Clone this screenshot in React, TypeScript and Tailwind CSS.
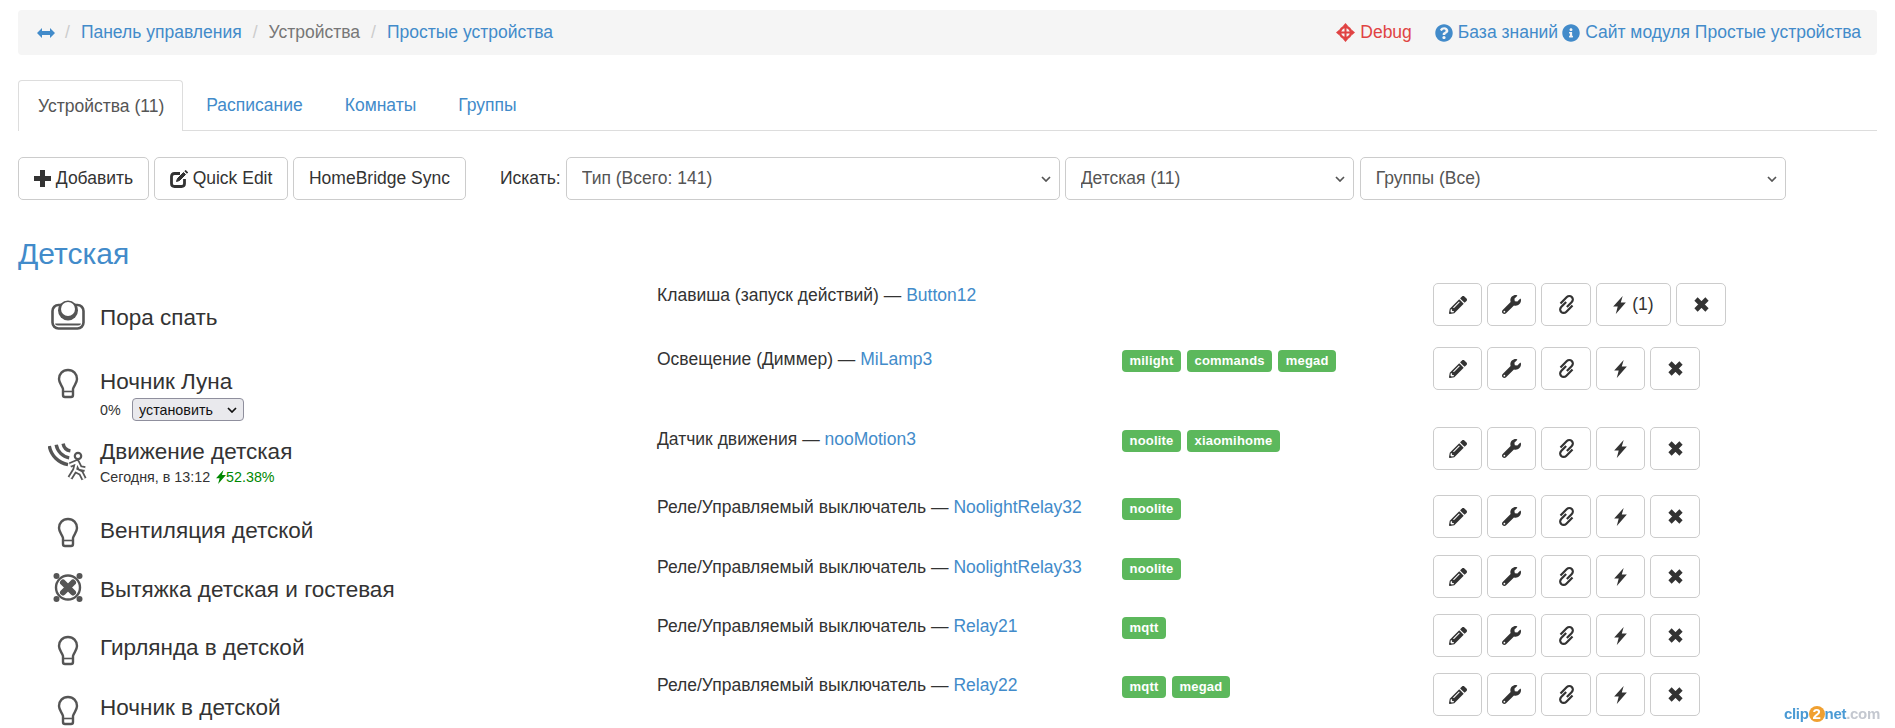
import { FaQuestionCircle, FaInfoCircle, FaPencilAlt, FaWrench } from "react-icons/fa"

const Bulb = () => (
    <svg width="22" height="31" viewBox="0 0 22 31" fill="none" stroke="#555" strokeWidth="2.4">
        <path d="M11 2C5.5 2 2 6 2 11c0 4 3 6.500 4 10v6q0 2 2 2h6q2 0 2-2v-6c1-3.500 4-6 4-10 0-5-3.500-9-9-9z" />
        <path d="M6.500 23.500h9" strokeWidth="1.600" />
    </svg>
)

const ButtonIcon = () => (
    <svg width="34" height="30" viewBox="0 0 34 30" fill="none" stroke="#555">
        <rect x="1.500" y="5" width="31" height="23.500" rx="6" strokeWidth="2.600" />
        <path d="M5 23.500q0 1 2 1h20q2 0 2-1" strokeWidth="1.800" />
        <circle cx="17" cy="10.500" r="10" fill="#555" stroke="none" />
        <circle cx="17" cy="9" r="7" fill="#fff" stroke="none" />
    </svg>
)

const MotionIcon = () => (
    <svg width="40" height="40" viewBox="0 0 40 40" fill="none" stroke="#555">
        <g strokeWidth="3.400">
            <path d="M15.100 1.600A9 9 0 0 0 22.400 8.900" />
            <path d="M8.200 2.800A16 16 0 0 0 21.200 15.800" />
            <path d="M1.300 4A23 23 0 0 0 20 22.600" />
        </g>
        <circle cx="30" cy="14" r="3.200" strokeWidth="2.200" />
        <path d="M22 23L29 20L32 26L37 27M29 20L27 28L22 36M27 28L33 31L36 37" strokeWidth="5.500" strokeLinejoin="round" />
        <path d="M22 23L29 20L32 26L37 27M29 20L27 28L22 36M27 28L33 31L36 37" stroke="#fff" strokeWidth="2" strokeLinejoin="round" />
    </svg>
)

const FanIcon = () => (
    <svg width="30" height="31" viewBox="0 0 30 31" fill="none" stroke="#555">
        <circle cx="15" cy="15.500" r="12" strokeWidth="2.400" />
        <circle cx="3.500" cy="4" r="3" fill="#555" stroke="none" />
        <circle cx="26.500" cy="4" r="3" fill="#555" stroke="none" />
        <circle cx="3.500" cy="27" r="3" fill="#555" stroke="none" />
        <circle cx="26.500" cy="27" r="3" fill="#555" stroke="none" />
        <path d="M10 10.500l10 10M20 10.500l-10 10" strokeWidth="6" strokeLinecap="round" />
    </svg>
)

const Bolt = () => (
    <svg width="13" height="18" viewBox="0 0 12 17" fill="#333">
        <path d="M9 0L0 10h4.300L2.500 17 12 6.200H7.200L9 0z" />
    </svg>
)

const ChainIcon = () => (
    <svg className="overflow-visible" width="19" height="19" viewBox="0 0 19 19" fill="none" stroke="#333" strokeWidth="2.200">
        <g transform="rotate(-45 9.500 9.500)">
            <path d="M6 4.500H15a3.500 3.500 0 0 1 0 7H8" />
            <path d="M13 14.500H4a3.500 3.500 0 0 1 0-7H11" />
        </g>
    </svg>
)

const RemoveIcon = () => (
    <svg width="15" height="15" viewBox="0 0 15 15" fill="none" stroke="#333" strokeWidth="4.600">
        <path d="M2 2l11 11M13 2L2 13" />
    </svg>
)

const PlusIcon = () => (
    <svg width="17" height="17" viewBox="0 0 17 17" fill="#333">
        <path d="M6 0h5v6h6v5h-6v6H6v-6H0V6h6z" />
    </svg>
)

const EditIcon = () => (
    <svg width="18" height="18" viewBox="0 0 18 18" fill="none" stroke="#333">
        <path d="M10 3.500H4.500q-3 0-3 3v7q0 3 3 3h7q3 0 3-3V9" strokeWidth="2.800" />
        <path d="M6.500 11.500l1-3 6-6 2 2-6 6z" fill="#333" strokeWidth="1" />
        <path d="M15 0.500l2.500 2.500" strokeWidth="1.800" />
    </svg>
)

const ArrowsIcon = () => (
    <svg width="18" height="10" viewBox="0 0 18 10" fill="#428bca">
        <path d="M0 5l5-5v3h8V0l5 5-5 5V7H5v3z" />
    </svg>
)

const Target = () => (
    <svg width="19" height="19" viewBox="0 0 19 19" fill="none" stroke="#e04343" strokeWidth="2.400">
        <circle cx="9.500" cy="9.500" r="5.500" />
        <path d="M9.500 0l-3 3.500h6zM9.500 19l-3-3.500h6zM0 9.500l3.500-3v6zM19 9.500l-3.500-3v6z" fill="#e04343" stroke="none" />
        <path d="M9.500 2v15M2 9.500h15" strokeWidth="2" />
    </svg>
)

const Chevron = () => (
    <svg className="absolute right-[9px] top-[19px] pointer-events-none" width="10" height="6" viewBox="0 0 10 6" fill="none" stroke="#555" strokeWidth="1.700">
        <path d="M1 1l4 4 4-4" />
    </svg>
)

const btn = "inline-flex items-center justify-center h-[43px] bg-white border border-[#ccc] rounded-[5px] text-[#333]"

const rooms = [
    { name: "Пора спать", icon: <ButtonIcon />, iconCls: "-mt-[3px]", rowCls: "h-[64px]" },
    { name: "Ночник Луна", icon: <Bulb />, iconCls: "mt-px", rowCls: "h-[70px]", dimmer: true },
    { name: "Движение детская", icon: <MotionIcon />, iconCls: "mt-[5px]", rowCls: "h-[79px]", motion: true },
    { name: "Вентиляция детской", icon: <Bulb />, iconCls: "mt-px", rowCls: "h-[59px]" },
    { name: "Вытяжка детская и гостевая", icon: <FanIcon />, iconCls: "-mt-[3px]", rowCls: "h-[58px]" },
    { name: "Гирлянда в детской", icon: <Bulb />, iconCls: "mt-[2px]", rowCls: "h-[60px]" },
    { name: "Ночник в детской", icon: <Bulb />, iconCls: "mt-[2px]", rowCls: "h-[35px]" },
]

const devices = [
    { type: "Клавиша (запуск действий)", name: "Button12", tags: [], count: "(1)", rowCls: "h-[64px]" },
    { type: "Освещение (Диммер)", name: "MiLamp3", tags: ["milight", "commands", "megad"], rowCls: "h-[80px]" },
    { type: "Датчик движения", name: "nooMotion3", tags: ["noolite", "xiaomihome"], rowCls: "h-[68px]" },
    { type: "Реле/Управляемый выключатель", name: "NoolightRelay32", tags: ["noolite"], rowCls: "h-[60px]" },
    { type: "Реле/Управляемый выключатель", name: "NoolightRelay33", tags: ["noolite"], rowCls: "h-[59px]" },
    { type: "Реле/Управляемый выключатель", name: "Relay21", tags: ["mqtt"], rowCls: "h-[59px]" },
    { type: "Реле/Управляемый выключатель", name: "Relay22", tags: ["mqtt", "megad"], rowCls: "h-[43px]" },
]

export default function App() {
    return (
        <div className="relative w-[1895px] h-[728px] overflow-hidden bg-white px-[18px] pt-[10px] text-[17.5px] text-[#333] font-['Liberation_Sans',Arial,sans-serif]">
            {/* breadcrumb */}
            <div className="flex items-center justify-between h-[45px] bg-[#f5f5f5] rounded-[4px] pl-[19px] pr-[16px] text-[#428bca]">
                <div className="flex items-center">
                    <ArrowsIcon />
                    <span className="text-[#ccc] ml-[10px] mr-[11px]">/</span>
                    <span>Панель управления</span>
                    <span className="text-[#ccc] ml-[11px] mr-[11px]">/</span>
                    <span className="text-[#777]">Устройства</span>
                    <span className="text-[#ccc] ml-[11px] mr-[11px]">/</span>
                    <span>Простые устройства</span>
                </div>
                <div className="flex items-center">
                    <Target />
                    <span className="text-[#e04343] ml-[5px] mr-[23px]">Debug</span>
                    <FaQuestionCircle className="w-[18px] h-[18px]" />
                    <span className="ml-[5px] mr-[4px]">База знаний</span>
                    <FaInfoCircle className="w-[18px] h-[18px]" />
                    <span className="ml-[5px]">Сайт модуля Простые устройства</span>
                </div>
            </div>

            {/* tabs */}
            <div className="flex h-[51px] mt-[25px] border-b border-[#ddd]">
                <div className="flex items-center h-[51px] pl-[19px] pr-[18px] bg-white border border-[#ddd] border-b-0 rounded-t-[4px] text-[#555]">Устройства (11)</div>
                <div className="flex items-center h-[50px] ml-[3px] px-[20px] text-[#428bca]">Расписание</div>
                <div className="flex items-center h-[50px] ml-[2px] px-[20px] text-[#428bca]">Комнаты</div>
                <div className="flex items-center h-[50px] ml-[2px] px-[20px] text-[#428bca]">Группы</div>
            </div>

            {/* toolbar */}
            <div className="flex items-center mt-[26px]">
                <div className={`${btn} w-[131px] gap-[5px]`}><PlusIcon />Добавить</div>
                <div className={`${btn} w-[134px] ml-[5px] gap-[5px]`}><EditIcon />Quick Edit</div>
                <div className={`${btn} w-[173px] ml-[5px]`}>HomeBridge Sync</div>
                <span className="ml-[34px] mr-[5px]">Искать:</span>
                <div className="relative w-[494px]">
                    <select className="appearance-none w-full h-[43px] pl-[15px] bg-white border border-[#ccc] rounded-[5px] text-[#555]"><option>Тип (Всего: 141)</option></select>
                    <Chevron />
                </div>
                <div className="relative w-[289px] ml-[5px]">
                    <select className="appearance-none w-full h-[43px] pl-[15px] bg-white border border-[#ccc] rounded-[5px] text-[#555]"><option>Детская (11)</option></select>
                    <Chevron />
                </div>
                <div className="relative w-[426px] ml-[6px]">
                    <select className="appearance-none w-full h-[43px] pl-[15px] bg-white border border-[#ccc] rounded-[5px] text-[#555]"><option>Группы (Все)</option></select>
                    <Chevron />
                </div>
            </div>

            <h2 className="mt-[36px] text-[30px] leading-[36px] text-[#428bca]">Детская</h2>

            <div className="flex">
                {/* rooms */}
                <div className="w-[639px] shrink-0 pl-[18px] pt-[31px]">
                    {rooms.map((room) => (
                        <div key={room.name} className={`flex items-start ${room.rowCls}`}>
                            <div className={`flex justify-center w-[64px] shrink-0 ${room.iconCls}`}>{room.icon}</div>
                            <div>
                                <div className="text-[22.5px] leading-[30px] text-[#333]">{room.name}</div>
                                {room.dimmer && (
                                    <div className="flex items-center text-[14.3px] leading-[23px] mt-[1px]">
                                        <span className="w-[32px]">0%</span>
                                        <div className="relative">
                                            <select className="appearance-none w-[112px] h-[23px] pl-[6px] bg-[#e9e9ed] border border-[#8f8f9d] rounded-[4px] text-[14.3px] text-[#111]"><option>установить</option></select>
                                            <svg className="absolute right-[7px] top-[9px] pointer-events-none" width="10" height="6" viewBox="0 0 10 6" fill="none" stroke="#111" strokeWidth="1.700"><path d="M1 1l4 4 4-4" /></svg>
                                        </div>
                                    </div>
                                )}
                                {room.motion && (
                                    <div className="flex items-center text-[14.3px] leading-[20px]">
                                        <span>Сегодня, в 13:12</span>
                                        <svg className="ml-[6px]" width="10" height="14" viewBox="0 0 12 17" fill="#080"><path d="M9 0L0 10h4.300L2.500 17 12 6.200H7.200L9 0z" /></svg>
                                        <span className="text-[#080]">52.38%</span>
                                    </div>
                                )}
                            </div>
                        </div>
                    ))}
                </div>

                {/* devices */}
                <div className="flex-1 pt-[11px]">
                    {devices.map((dev) => (
                        <div key={dev.name} className={`grid grid-cols-[465px_311px_auto] ${dev.rowCls}`}>
                            <div className="pt-px leading-[22px]">{dev.type} — <span className="text-[#428bca]">{dev.name}</span></div>
                            <div className="flex gap-[6px] pt-[3px] items-start">
                                {dev.tags.map((tag) => (
                                    <span key={tag} className="inline-flex items-center h-[22px] px-[7.500px] bg-[#5cb85c] rounded-[4px] text-white text-[13px] font-bold tracking-[0.2px]">{tag}</span>
                                ))}
                            </div>
                            <div className="flex gap-[5px]">
                                <div className={`${btn} w-[49px]`}><FaPencilAlt className="w-[18px] h-[18px]" /></div>
                                <div className={`${btn} w-[49px]`}><FaWrench className="w-[19px] h-[19px]" /></div>
                                <div className={`${btn} w-[50px]`}><ChainIcon /></div>
                                <div className={`${btn} ${dev.count ? "w-[75px] gap-[6px]" : "w-[49px]"}`}><Bolt />{dev.count}</div>
                                <div className={`${btn} w-[50px]`}><RemoveIcon /></div>
                            </div>
                        </div>
                    ))}
                </div>
            </div>

            {/* watermark */}
            <div className="absolute right-[15px] bottom-[3px] flex items-center text-[15px] font-bold tracking-[-0.3px] blur-[0.4px]">
                <span className="text-[#4a9ad4]">clip</span>
                <span className="flex items-center justify-center w-[16px] h-[16px] rounded-full bg-[#f0a030] text-white">2</span>
                <span className="text-[#4a9ad4]">net</span>
                <span className="text-[#c4c8d0]">.com</span>
            </div>
        </div>
    )
}
